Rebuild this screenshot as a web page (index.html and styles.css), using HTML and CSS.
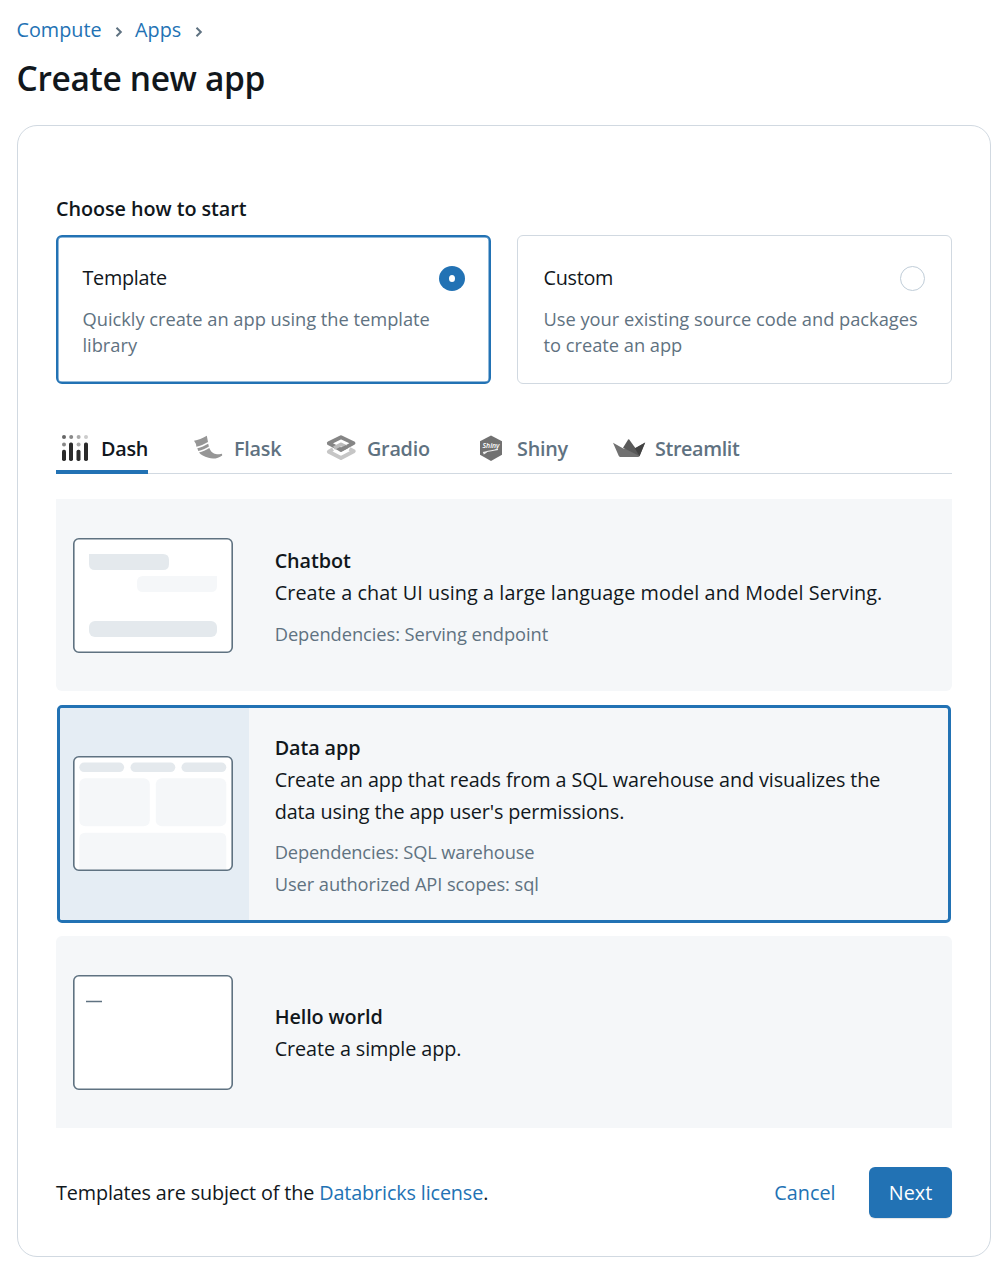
FILE: index.html
```html
<!DOCTYPE html>
<html lang="en">
<head>
<meta charset="utf-8">
<title>Create new app</title>
<link rel="stylesheet" href="styles.css">
</head>
<body>
<nav class="breadcrumb">
  <a>Compute</a>
  <svg width="8" height="12" viewBox="0 0 8 12"><path d="M1.5 1.8 5.8 6 1.5 10.2"/></svg>
  <a>Apps</a>
  <svg width="8" height="12" viewBox="0 0 8 12"><path d="M1.5 1.8 5.8 6 1.5 10.2"/></svg>
</nav>
<h1>Create new app</h1>
<main class="panel">
  <h2>Choose how to start</h2>
  <div class="choices">
    <section class="choice selected">
      <div class="choice-head"><span>Template</span><i class="radio on"><i></i></i></div>
      <p>Quickly create an app using the template<br>library</p>
    </section>
    <section class="choice">
      <div class="choice-head"><span>Custom</span><i class="radio"></i></div>
      <p>Use your existing source code and packages<br>to create an app</p>
    </section>
  </div>
  <div class="tabs">
    <div class="tab active">
      <svg width="38" height="32" viewBox="0 0 38 32">
        <g fill="#2b2b2b"><rect x="6" y="15.700" width="4" height="11.300" rx="1.700"/><rect x="13" y="8.500" width="4" height="18.500" rx="1.700"/><rect x="20.500" y="15.700" width="4" height="11.300" rx="1.700"/><rect x="28" y="8.500" width="4" height="18.500" rx="1.700"/></g>
        <circle cx="8" cy="3" r="2" fill="#666"/><circle cx="15.200" cy="3" r="2" fill="#888"/><circle cx="22.600" cy="3" r="2" fill="#aaa"/><circle cx="30" cy="3" r="2" fill="#ccc"/><circle cx="8" cy="10.400" r="2" fill="#888"/><circle cx="22.600" cy="10.400" r="2" fill="#aaa"/>
      </svg><span>Dash</span>
    </div>
    <div class="tab flask">
      <svg width="40" height="32" viewBox="0 0 40 32" fill="#969696"><path d="M6 6.800C10 6.300 14.500 4.100 18.800 1.800L20 8C16 10.300 12.300 12 8.400 12.800Q8.300 9.500 6 6.800Z"/><path d="M9.300 14.300C13 13.500 17 11.500 20.200 9.700L20.900 12.500C17.500 14.600 14 16.300 10.300 17.100Z"/><path d="M11 18.600C14.500 17.600 18 16.100 21.300 14C22.600 17.800 26 20.200 29 20.200Q31 20.200 34 19.700L34.200 21.400C30.500 24.400 25 25.400 20.500 23.800C16 22.600 13 21.100 11 18.600Z"/></svg><span>Flask</span>
    </div>
    <div class="tab gradio">
      <svg width="40" height="32" viewBox="0 0 40 32" fill="none" stroke-width="3.800" stroke-linejoin="round"><path d="M12 15.200 7.800 17.700 20 24 32.800 17.200 28.500 14.900" stroke="#c6c6c6"/><path d="M20 3.200 7.800 9.300 20 15.800 32.500 9.100Z" stroke="#858585"/><path d="M13 14.200 20 10.400 25 12.900" stroke="#bcbcbc"/><path d="M18.500 15 20 15.800 26 12.600" stroke="#858585"/></svg><span>Gradio</span>
    </div>
    <div class="tab shiny">
      <svg width="40" height="32" viewBox="0 0 40 32"><path d="M20 1.500 31 7.300V20.700L20 27 9 20.700V7.300Z" fill="#717171"/><text class="badge-script" x="11.500" y="14.300" textLength="17" lengthAdjust="spacingAndGlyphs">Shiny</text><path d="M12 18.500C17 17 21 16.500 27 15.500M12.500 20 16 17.800" fill="none" stroke="#eee" stroke-width="1.200"/></svg><span>Shiny</span>
    </div>
    <div class="tab streamlit">
      <svg width="40" height="32" viewBox="0 0 40 32"><path d="M4 8.700 14.300 14.400 26 14.500 36.200 8.500 30.500 22.200Q30 22.900 29 22.900H11.500Q10.300 22.900 9.800 22Z" fill="#717171"/><path d="M20 5.300 26.500 14.300 30.500 22 14 13.800 19 5.700Q19.500 5 20 5.300Z" fill="#5a5a5a"/><path d="M25.800 14.300 36.200 8.500 30.500 22.200Z" fill="#424242"/></svg><span>Streamlit</span>
    </div>
  </div>
  <div class="templates">
    <article class="template first">
      <div class="thumb-cell"><svg width="160" height="116" viewBox="0 0 160 116"><rect class="frame" x=".8" y=".8" width="158.400" height="113.400" rx="5"/><path fill="#e4e9ed" d="M16 16H90Q96 16 96 22V26Q96 32 90 32H22Q16 32 16 26Z"/><path fill="#f5f7f9" d="M70 38H144V48Q144 54 138 54H70Q64 54 64 48V44Q64 38 70 38Z"/><rect x="16" y="83" width="128" height="16" rx="6" fill="#e4e9ed"/></svg></div>
      <div class="copy"><h3>Chatbot</h3><p class="wide">Create a chat UI using a large language model and Model Serving.</p><p class="meta">Dependencies: Serving endpoint</p></div>
    </article>
    <article class="template selected">
      <div class="thumb-cell"><svg width="160" height="116" viewBox="0 0 160 116"><rect x=".8" y=".8" width="158.400" height="113.400" rx="5" fill="#fff"/><g fill="#e4e9ed"><rect x="6.300" y="6.500" width="44.800" height="9.600" rx="4.800"/><rect x="57.500" y="6.500" width="44.800" height="9.600" rx="4.800"/><rect x="108.500" y="6.500" width="44.800" height="9.600" rx="4.800"/></g><g fill="#f5f7f9"><rect x="6.300" y="22.300" width="70.500" height="48" rx="6"/><rect x="82.800" y="22.300" width="70.500" height="48" rx="6"/><path d="M6.300 114V82.800Q6.300 76.800 12.300 76.800H147.300Q153.300 76.800 153.300 82.800V114Z"/></g><rect class="frame outline" x=".8" y=".8" width="158.400" height="113.400" rx="5"/></svg></div>
      <div class="copy"><h3>Data app</h3><p>Create an app that reads from a SQL warehouse and visualizes the<br>data using the app user's permissions.</p><p class="meta"><span class="tight">Dependencies: SQL warehouse</span><br>User authorized API scopes: sql</p></div>
    </article>
    <article class="template last">
      <div class="thumb-cell"><svg width="160" height="116" viewBox="0 0 160 116"><rect class="frame" x=".8" y=".8" width="158.400" height="113.400" rx="5"/><path d="M13 26.500H29" stroke="#5f7281" stroke-width="1.600"/></svg></div>
      <div class="copy"><h3>Hello world</h3><p>Create a simple app.</p></div>
    </article>
  </div>
  <footer>
    <p>Templates are subject of the <a>Databricks license</a>.</p>
    <a class="cancel">Cancel</a><button>Next</button>
  </footer>
</main>
</body>
</html>
```
FILE: styles.css
```css
* { box-sizing: border-box; }
body { margin: 0; padding: 14px 14px 21px 16.500px; height: 1278px; background: #fff; color: #11171c; font: 19.8px/32px "Open Sans", "Noto Sans", sans-serif; }
h1, h2, h3, p { margin: 0; font-weight: 400; }
svg { flex: none; display: block; }
a { color: #2272b4; }
.breadcrumb { display: flex; align-items: center; height: 32px; }
.breadcrumb svg { margin: 4px 12px 0 13.500px; fill: none; stroke: #5f7281; stroke-width: 2; }
h1 { height: 48px; margin-top: 8px; font-size: 33.5px; line-height: 49px; font-weight: 600; letter-spacing: -.35px; }
.panel { height: 1132px; margin: 23px 0 0 .5px; padding: 67px 38px 38px; border: 1px solid #d1d9e1; border-radius: 20px; }
h2 { font-size: 19.8px; line-height: 32px; font-weight: 600; letter-spacing: -.06px; }
.choices { display: grid; grid-template-columns: 1fr 1fr; gap: 26px; margin-top: 10px; }
.choice { height: 149px; padding: 25px 26px 25px 25.500px; border: 1px solid #d1d9e1; border-radius: 6px; }
.choice.selected { padding: 24px 24.500px; border: 2px solid #2272b4; box-shadow: inset 0 0 0 .5px #2272b4; }
.choice-head { display: flex; justify-content: space-between; align-items: center; height: 34px; letter-spacing: -.28px; }
.radio { width: 25px; height: 25px; border: 1px solid #c0cdd8; border-radius: 50%; }
.radio.on { display: grid; place-items: center; width: 26px; border: 0; background: #2272b4; }
.radio.on i { width: 6px; height: 7px; border-radius: 50%; background: #fff; }
.choice p { margin-top: 11px; color: #5f7281; font-size: 18.300px; line-height: 26px; letter-spacing: -.02px; }
.tabs { display: flex; height: 56px; margin-top: 34px; border-bottom: 1px solid #d1d9e1; }
.tab { display: flex; align-items: center; height: 56px; margin-right: 40px; padding-top: 5px; color: #5f7281; font-weight: 600; letter-spacing: -.25px; }
.tab svg { margin: 2px 6px 0 0; }
.tab.active { width: 92px; padding-top: 9px; border-bottom: 4.500px solid #2272b4; color: #11171c; }
.tab.active svg { margin: 2px 7px 0 0; }
.tab.flask { width: 93px; }
.tab.gradio { width: 110px; }
.tab.shiny { width: 98px; }
.tab.streamlit { margin-right: 0; letter-spacing: -.38px; }
.badge-script { font: italic 600 6.500px "Open Sans", sans-serif; fill: #fff; letter-spacing: 0; }
.templates { display: grid; grid-template-rows: 192px 218px 192px; row-gap: 14px; margin-top: 25px; }
.template { display: flex; background: #f5f7f9; overflow: hidden; }
.template.first { border-radius: 0 0 6px 6px; }
.template.last { border-radius: 6px 6px 0 0; margin-top: -1px; height: 192px; }
.template.selected { margin: 0 1px; border: 3px solid #2272b4; border-radius: 5px; }
.thumb-cell { display: flex; align-items: center; width: 193px; padding: 2px 0 0 17px; }
.selected .thumb-cell { width: 189px; padding: 0 0 0 13px; background: #e5edf4; }
.frame { fill: #fff; stroke: #5f7281; stroke-width: 1.600; }
.frame.outline { fill: none; }
.copy { display: flex; flex-direction: column; justify-content: center; padding: 4px 0 0 25.700px; letter-spacing: -.1px; }
.last .copy { padding-top: 2px; }
.selected .copy { padding-top: 4px; }
h3 { font-size: 19.800px; line-height: 32px; font-weight: 600; }
.copy .wide { letter-spacing: .08px; }
.copy .meta { margin-top: 9px; color: #5f7281; font-size: 18.300px; letter-spacing: -.06px; }
.selected .copy .meta { margin-top: 8px; letter-spacing: -.08px; }
.meta .tight { letter-spacing: -.15px; }
footer { display: flex; align-items: center; height: 51px; margin-top: 38px; }
footer p { flex: 1; letter-spacing: -.13px; }
.cancel { margin-right: 33.500px; }
button { width: 83px; height: 51px; padding: 0; border: 0; border-radius: 6px; background: #2272b4; color: #fff; font: inherit; box-shadow: 0 1px 1px #e5e5e5; }
```
